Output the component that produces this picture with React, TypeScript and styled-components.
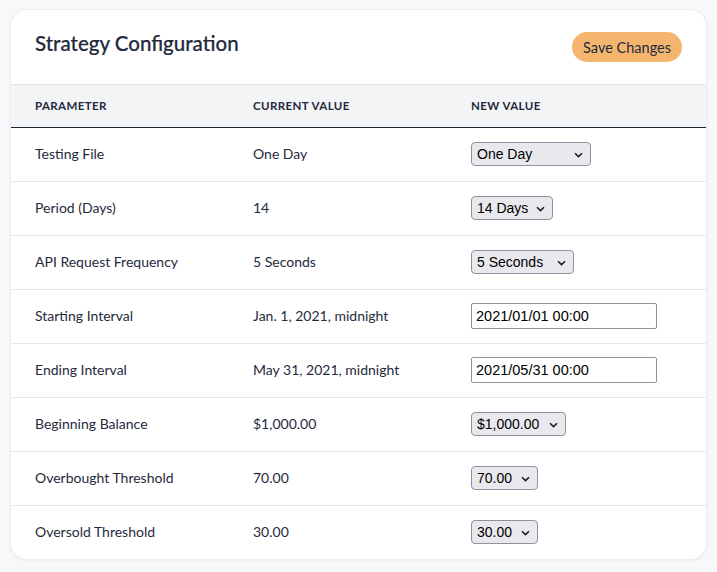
import { createGlobalStyle, styled } from "styled-components";

const GlobalStyle = createGlobalStyle`
  html, body {
    margin: 0;
    background: #f7f8fa;
  }
  body {
    padding: 10px 11px;
    font-family: Lato, "Noto Sans", sans-serif;
    color: #1f2a3c;
  }
`;

const Card = styled.div`
  background: #ffffff;
  border-radius: 16px;
  box-shadow: 0 0 0 1px #eceef1, 0 1px 4px rgba(15, 23, 42, 0.08);
  overflow: hidden;
`;

const Header = styled.div`
  display: flex;
  justify-content: space-between;
  align-items: flex-start;
  padding: 21px 24px 22px 24px;
  border-bottom: 1px solid #e3e5e9;
`;

const Title = styled.h2`
  margin: 0;
  font-size: 20.5px;
  line-height: 24px;
  font-weight: 500;
  -webkit-text-stroke: 0.2px #1f2a3c;
  color: #1f2a3c;
`;

const SaveButton = styled.button`
  height: 30px;
  padding: 0 11px;
  margin-top: 1px;
  border: none;
  border-radius: 15px;
  background: #f4b66f;
  color: #1f2a3c;
  font-family: Lato, "Noto Sans", sans-serif;
  font-size: 14.5px;
  cursor: pointer;
`;

const Table = styled.table`
  width: 100%;
  border-collapse: collapse;
`;

const HeadRow = styled.tr`
  background: #f3f4f6;
  border-bottom: 1.5px solid #1f2433;
`;

const Th = styled.th<{ $w?: number }>`
  width: ${(p) => (p.$w ? `${p.$w}px` : "auto")};
  height: 42px;
  padding: 0 0 0 24px;
  text-align: left;
  font-size: 11.5px;
  font-weight: 700;
  letter-spacing: 0.4px;
  text-transform: uppercase;
  color: #1f2a3c;
  box-sizing: border-box;
`;

const Row = styled.tr`
  border-bottom: 1px solid #e5e7eb;
  &:last-child {
    border-bottom: none;
  }
`;

const Td = styled.td`
  height: 52px;
  padding: 0 0 1px 24px;
  font-size: 14px;
  color: #1f2a3c;
`;

const SelectWrap = styled.span`
  position: relative;
  display: inline-block;
  vertical-align: middle;
`;

const Select = styled.select<{ $w: number }>`
  appearance: none;
  width: ${(p) => p.$w}px;
  height: 24px;
  padding: 0 20px 0 5px;
  border: 1px solid #8f8f9d;
  border-radius: 4px;
  background: #e9e9ed;
  font-family: "Liberation Sans", Arial, sans-serif;
  font-size: 14px;
  color: #000;
`;

const Chevron = styled.svg`
  position: absolute;
  right: 8px;
  top: 10px;
  pointer-events: none;
`;

const TextInput = styled.input`
  width: 186px;
  height: 26px;
  box-sizing: border-box;
  padding: 0 4px;
  border: 1px solid #8f8f9d;
  border-radius: 2px;
  background: #fff;
  font-family: "Liberation Sans", Arial, sans-serif;
  font-size: 14.5px;
  color: #000;
  vertical-align: middle;
`;

type Field =
  | { kind: "select"; value: string; width: number }
  | { kind: "input"; value: string };

const rows: { param: string; current: string; field: Field }[] = [
  { param: "Testing File", current: "One Day", field: { kind: "select", value: "One Day", width: 120 } },
  { param: "Period (Days)", current: "14", field: { kind: "select", value: "14 Days", width: 82 } },
  { param: "API Request Frequency", current: "5 Seconds", field: { kind: "select", value: "5 Seconds", width: 103 } },
  { param: "Starting Interval", current: "Jan. 1, 2021, midnight", field: { kind: "input", value: "2021/01/01 00:00" } },
  { param: "Ending Interval", current: "May 31, 2021, midnight", field: { kind: "input", value: "2021/05/31 00:00" } },
  { param: "Beginning Balance", current: "$1,000.00", field: { kind: "select", value: "$1,000.00", width: 95 } },
  { param: "Overbought Threshold", current: "70.00", field: { kind: "select", value: "70.00", width: 67 } },
  { param: "Oversold Threshold", current: "30.00", field: { kind: "select", value: "30.00", width: 67 } },
];

function FieldControl({ field }: { field: Field }) {
  if (field.kind === "input") {
    return <TextInput type="text" defaultValue={field.value} />;
  }
  return (
    <SelectWrap>
      <Select $w={field.width} defaultValue={field.value}>
        <option>{field.value}</option>
      </Select>
      <Chevron width="9" height="6" viewBox="0 0 9 6">
        <path d="M1 1.2 L4.5 4.6 L8 1.2" fill="none" stroke="#1a1a1a" strokeWidth="1.5" />
      </Chevron>
    </SelectWrap>
  );
}

export default function App() {
  return (
    <>
      <GlobalStyle />
      <Card>
        <Header>
          <Title>Strategy Configuration</Title>
          <SaveButton>Save Changes</SaveButton>
        </Header>
        <Table>
          <thead>
            <HeadRow>
              <Th $w={218}>Parameter</Th>
              <Th $w={218}>Current Value</Th>
              <Th>New Value</Th>
            </HeadRow>
          </thead>
          <tbody>
            {rows.map((r) => (
              <Row key={r.param}>
                <Td>{r.param}</Td>
                <Td>{r.current}</Td>
                <Td>
                  <FieldControl field={r.field} />
                </Td>
              </Row>
            ))}
          </tbody>
        </Table>
      </Card>
    </>
  );
}
